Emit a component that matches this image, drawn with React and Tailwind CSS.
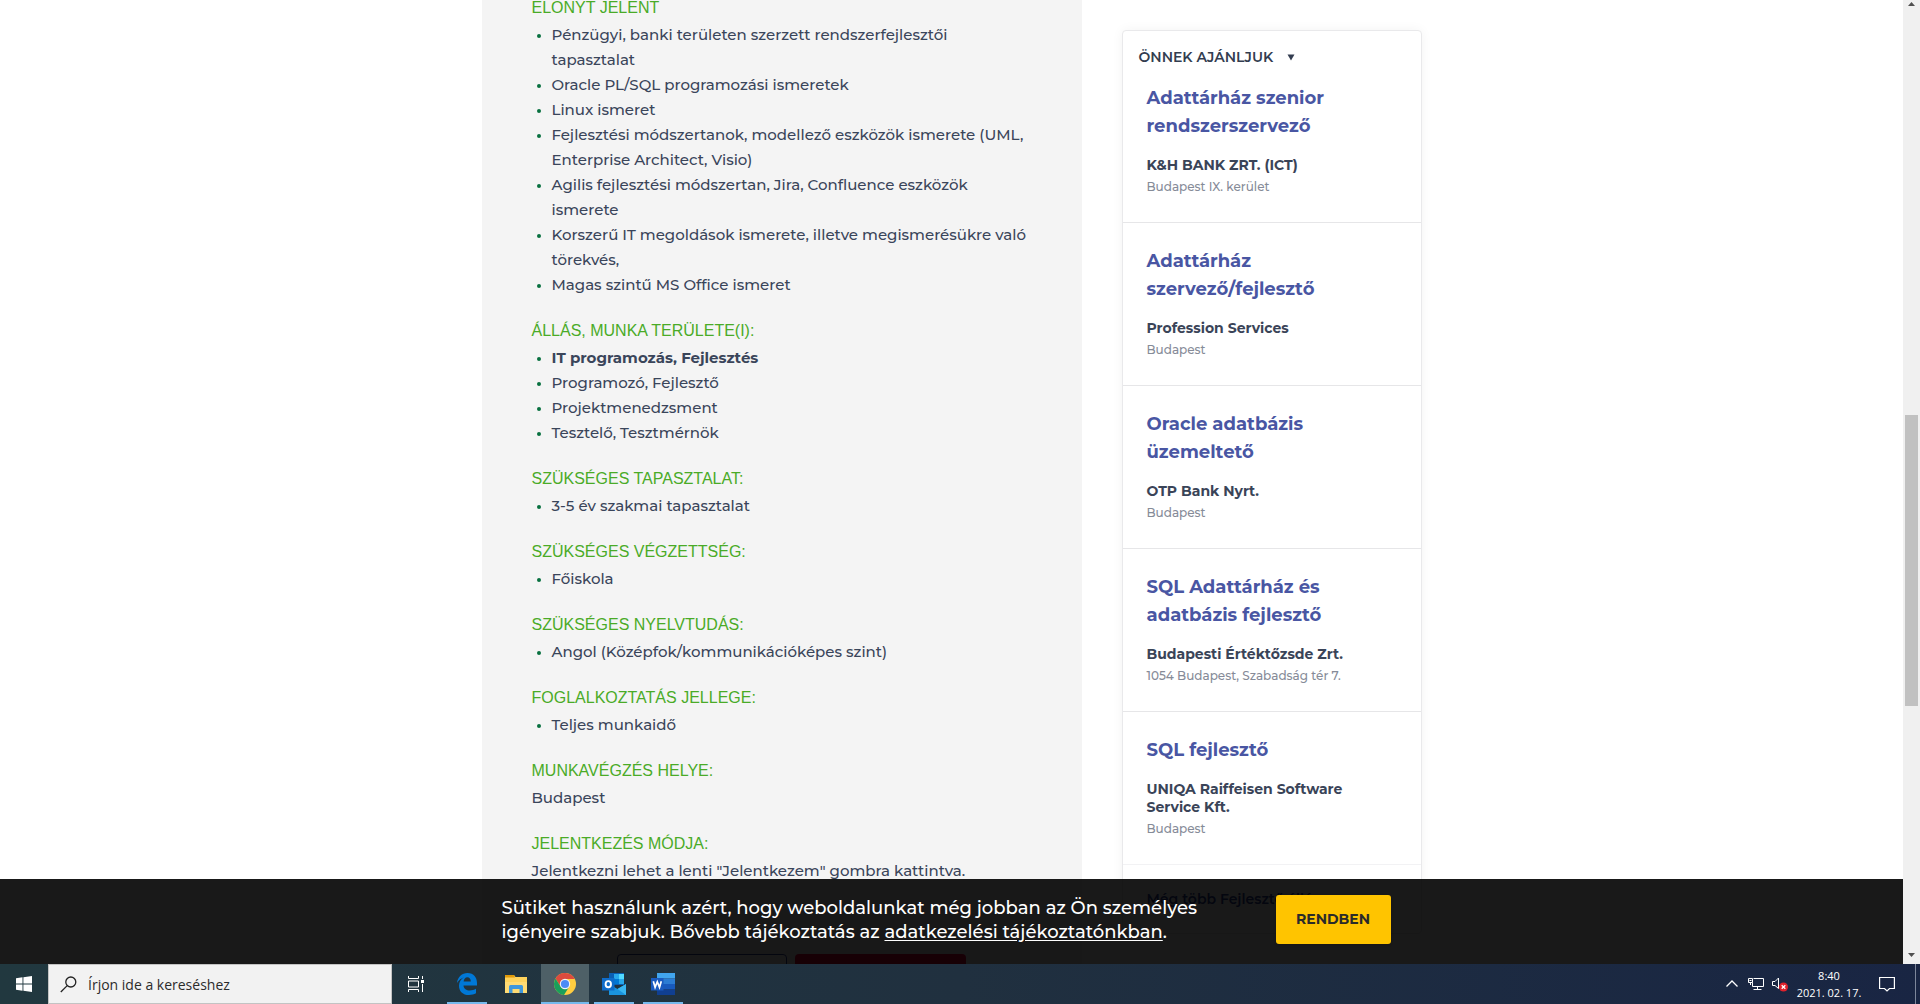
import React from "react";

const advantages = [
  "Pénzügyi, banki területen szerzett rendszerfejlesztői tapasztalat",
  "Oracle PL/SQL programozási ismeretek",
  "Linux ismeret",
  "Fejlesztési módszertanok, modellező eszközök ismerete (UML, Enterprise Architect, Visio)",
  "Agilis fejlesztési módszertan, Jira, Confluence eszközök ismerete",
  "Korszerű IT megoldások ismerete, illetve megismerésükre való törekvés,",
  "Magas szintű MS Office ismeret",
];

const sections = [
  { title: "ELŐNYT JELENT", items: advantages },
  {
    title: "ÁLLÁS, MUNKA TERÜLETE(I):",
    items: [
      <strong className="font-bold">IT programozás, Fejlesztés</strong>,
      "Programozó, Fejlesztő",
      "Projektmenedzsment",
      "Tesztelő, Tesztmérnök",
    ],
  },
  { title: "SZÜKSÉGES TAPASZTALAT:", items: ["3-5 év szakmai tapasztalat"] },
  { title: "SZÜKSÉGES VÉGZETTSÉG:", items: ["Főiskola"] },
  { title: "SZÜKSÉGES NYELVTUDÁS:", items: ["Angol (Középfok/kommunikációképes szint)"] },
  { title: "FOGLALKOZTATÁS JELLEGE:", items: ["Teljes munkaidő"] },
  { title: "MUNKAVÉGZÉS HELYE:", text: "Budapest" },
  { title: "JELENTKEZÉS MÓDJA:", text: 'Jelentkezni lehet a lenti "Jelentkezem" gombra kattintva.' },
];

const jobs = [
  { title: "Adattárház szenior rendszerszervező", company: "K&H BANK ZRT. (ICT)", place: "Budapest IX. kerület" },
  { title: "Adattárház szervező/fejlesztő", company: "Profession Services", place: "Budapest" },
  { title: "Oracle adatbázis üzemeltető", company: "OTP Bank Nyrt.", place: "Budapest" },
  { title: "SQL Adattárház és adatbázis fejlesztő", company: "Budapesti Értéktőzsde Zrt.", place: "1054 Budapest, Szabadság tér 7." },
  { title: "SQL fejlesztő", company: "UNIQA Raiffeisen Software Service Kft.", place: "Budapest" },
];

function Section({ title, items, text }) {
  return (
    <section className="mb-[25px]">
      <h2 className="mb-[5px] font-['Liberation_Sans',sans-serif] text-[16px] leading-[18px] font-normal text-[#4aab27]">{title}</h2>
      {items ? (
        <ul className="list-disc pl-5 marker:text-[12px] marker:text-[#08703f]">
          {items.map((item, i) => (
            <li key={i}>{item}</li>
          ))}
        </ul>
      ) : (
        <p>{text}</p>
      )}
    </section>
  );
}

function JobDetails() {
  return (
    <main className="w-[600px] shrink-0 bg-[#f4f4f4] pr-[52px] pl-[50px] text-[15px] leading-[25px] font-medium text-[#3a455a]">
      <div className="-mt-px">
        {sections.map((s) => (
          <Section key={s.title} {...s} />
        ))}
      </div>
      <div className="mt-[71px] flex gap-2 pl-[85px]">
        <button type="button" aria-label="Mentés" className="h-12 w-[170px] rounded border border-[#2e3f95] bg-white" />
        <button type="button" aria-label="Jelentkezem" className="h-12 w-[171px] rounded bg-[#e4003a]" />
      </div>
    </main>
  );
}

function Recommendations() {
  return (
    <aside className="mt-[30px] w-[300px] shrink-0 self-start rounded border border-[#e9e9eb] bg-white shadow-[0_0_12px_rgba(0,0,0,0.05)]">
      <button type="button" className="flex items-center gap-3.5 px-4 pt-[17px] pb-[18px] text-[14px] leading-[18px] font-semibold text-[#333d50]">
        ÖNNEK AJÁNLJUK
        <svg viewBox="0 0 8 7" className="h-[7px] w-2" fill="currentColor" aria-hidden="true">
          <path d="M0.5 0.5h7L4 6.5z" />
        </svg>
      </button>
      {jobs.map((job, i) => (
        <article key={job.title} className={i === 0 ? "pr-10 pb-[26px] pl-6" : "border-t border-[#e6e6e8] pt-6 pr-10 pb-[26px] pl-6"}>
          <h3 className="text-[18px] leading-7 font-bold text-[#4956a3]">
            <a href="#allas">{job.title}</a>
          </h3>
          <p className="mt-4 text-[14px] leading-[18px] font-bold text-[#3a4458]">{job.company}</p>
          <p className="mt-1 text-[12px] leading-[18px] font-medium text-[#868b98]">{job.place}</p>
        </article>
      ))}
      <div className="border-t border-[#f2f2f4] px-6 py-[22px]">
        <a href="#tovabbi" className="text-[14px] leading-[18px] font-semibold text-[#2e3f95]">Még több Fejlesztő állás</a>
      </div>
    </aside>
  );
}

function CookieBar() {
  return (
    <div className="absolute inset-x-0 bottom-0 bg-black/90 pr-[17px]">
      <div className="mx-auto flex h-[85px] w-[940px] items-center justify-between pr-[31px] pb-1 pl-5">
        <p className="w-[710px] text-[18px] leading-6 font-medium text-white">
          Sütiket használunk azért, hogy weboldalunkat még jobban az Ön személyes igényeire szabjuk. Bővebb tájékoztatás az{" "}
          <a href="#adatkezeles" className="underline underline-offset-2">adatkezelési tájékoztatónkban</a>.
        </p>
        <button type="button" className="h-[49px] w-[115px] rounded-[3px] bg-[#ffc400] text-[14px] font-bold text-[#2a2a2a] shadow">
          RENDBEN
        </button>
      </div>
    </div>
  );
}

function Scrollbar() {
  return (
    <div className="z-10 flex w-[17px] shrink-0 flex-col items-center bg-[#f0f0f0]">
      <svg viewBox="0 0 17 8" className="h-2 w-[17px]" aria-hidden="true"><path d="M5 6h7L8.5 2z" fill="#505050" /></svg>
      <div className="flex-[407]" />
      <div className="w-[13px] flex-[291] bg-[#c1c1c1]" />
      <div className="flex-[241]" />
      <svg viewBox="0 0 17 17" className="h-[17px] w-[17px]" aria-hidden="true"><path d="M5 6h7L8.5 10z" fill="#505050" /></svg>
    </div>
  );
}

function WindowsIcon() {
  return (
    <svg viewBox="0 0 16 16" className="size-4" fill="#fff" aria-hidden="true">
      <path d="M0 2.2 6.5 1.3v6.2H0zM7.4 1.2 16 0v7.5H7.4zM0 8.4h6.5v6.3L0 13.8zM7.4 8.4H16V16l-8.6-1.2z" />
    </svg>
  );
}

function TaskViewIcon() {
  return (
    <svg viewBox="0 0 16 16" className="size-4" fill="none" stroke="#fff" aria-hidden="true">
      <path d="M.5 0v2.5h10V0M.5 16v-2.5h10V16M.5 5h10v6H.5zM14.5 0v3M14.5 8v8" />
      <path d="M13 4h3v3h-3z" fill="#fff" stroke="none" />
    </svg>
  );
}

function EdgeIcon() {
  return (
    <svg viewBox="0 0 20 22" className="h-[22px] w-5" aria-hidden="true">
      <path fill="#0078d7" d="M0 10C.6 4 5 0 10.5 0 16.800 0 20 4.500 20 10v2.500H6.500c.2 3.500 3 5 6.300 5 2.300 0 4.400-.6 6.200-1.700v4.500c-2 1.100-4.300 1.700-7 1.700-6.200 0-10-3.700-10-9.300 0-3.700 2-6.700 5-8.400C4.400 5.300 1.700 7 0 10zm6.600-1.400h7.200c0-2.700-1.300-4.300-3.500-4.300-2 0-3.400 1.700-3.700 4.300z" />
    </svg>
  );
}

function ExplorerIcon() {
  return (
    <svg viewBox="0 0 22 18" className="h-[18px] w-[22px]" aria-hidden="true">
      <path d="M0 0h9l1.500 2H22v16H0z" fill="#ffd35c" />
      <path d="M0 0h9l1 2.500H0z" fill="#e09a0a" />
      <path d="M0 7h22v11H0z" fill="#ffdb74" />
      <path d="M4 18v-6.500Q4 10 5.500 10h11q1.500 0 1.500 1.500V18h-3.500v-4h-7v4z" fill="#3f97dc" />
    </svg>
  );
}

function ChromeIcon() {
  return (
    <svg viewBox="0 0 22 22" className="size-[22px]" aria-hidden="true">
      <circle cx="11" cy="11" r="11" fill="#ffcd40" />
      <path d="M11 11V6h9.800A11 11 0 0 0 1.500 5.500L6.600 13.500z" fill="#dd4b3e" />
      <path d="M1.500 5.500A11 11 0 0 0 10 22l5-8-4-3-4.400 2.500z" fill="#1a9f5b" />
      <circle cx="11" cy="11" r="5.200" fill="#f4f4f4" />
      <circle cx="11" cy="11" r="4.100" fill="#4c8bf5" />
    </svg>
  );
}

function OutlookIcon() {
  return (
    <svg viewBox="0 0 24 22" className="h-[22px] w-6" aria-hidden="true">
      <path d="M7 0h15v12H7z" fill="#0a5fb4" />
      <path d="M12 1h5v5h-5z" fill="#28a8ea" />
      <path d="M17 1h5v5h-5z" fill="#50d9ff" />
      <path d="M12 6h5v5h-5z" fill="#0078d4" />
      <path d="M17 6h5v5h-5z" fill="#28a8ea" />
      <path d="M7 11l8.500 5L24 11v11H7z" fill="#1a94de" />
      <path d="M24 11v11L15.500 16z" fill="#38b6f1" />
      <path d="M0 5h12.500v12.500H0z" fill="#0f6cc9" />
      <ellipse cx="6.300" cy="11.200" rx="2.700" ry="3.100" fill="none" stroke="#fff" strokeWidth="1.900" />
    </svg>
  );
}

function WordIcon() {
  return (
    <svg viewBox="0 0 24 22" className="h-[22px] w-6" aria-hidden="true">
      <path d="M6 0h18v5.500H6z" fill="#41a5ee" />
      <path d="M6 5.500h18V11H6z" fill="#2b7cd3" />
      <path d="M6 11h18v5.500H6z" fill="#185abd" />
      <path d="M6 16.500h18V22H6z" fill="#103f91" />
      <path d="M0 5h12.500v12.500H0z" fill="#1a5bbf" />
      <path d="M2.300 8.300l1.800 6 2.200-5.500 2.200 5.500 1.800-6" fill="none" stroke="#fff" strokeWidth="1.700" />
    </svg>
  );
}

const apps = [
  { name: "Microsoft Edge", Icon: EdgeIcon, open: true },
  { name: "Fájlkezelő", Icon: ExplorerIcon },
  { name: "Google Chrome", Icon: ChromeIcon, open: true, active: true },
  { name: "Outlook", Icon: OutlookIcon, open: true },
  { name: "Word", Icon: WordIcon, open: true },
];

function Taskbar() {
  return (
    <footer className="flex h-10 shrink-0 items-stretch bg-linear-to-r from-[#21383f] via-[#20303f] to-[#192543] text-white">
      <button type="button" aria-label="Start" className="flex w-12 items-center justify-center"><WindowsIcon /></button>
      <label className="flex w-[344px] items-center gap-[11px] border border-[#c3c3c3] bg-[#f2f2f2] pl-[11px]">
        <svg viewBox="0 0 17 17" className="size-[17px]" fill="none" stroke="#222" strokeWidth="1.300" aria-hidden="true">
          <circle cx="10.800" cy="6" r="5" />
          <path d="M7.200 9.600.8 16" />
        </svg>
        <input
          type="text"
          aria-label="Keresés"
          placeholder="Írjon ide a kereséshez"
          className="min-w-0 flex-1 bg-transparent font-['Open_Sans',sans-serif] text-[14px] text-[#222] outline-none placeholder:text-[#2b2b2b]"
        />
      </label>
      <button type="button" aria-label="Feladatnézet" className="mr-[3px] flex w-12 items-center justify-center"><TaskViewIcon /></button>
      <nav className="flex gap-px" aria-label="Alkalmazások">
        {apps.map(({ name, Icon, open, active }) => (
          <button
            key={name}
            type="button"
            aria-label={name}
            className={active ? "flex w-12 flex-col items-center bg-[#4e6067]" : "flex w-12 flex-col items-center"}
          >
            <span className="flex flex-1 items-center pt-0.5"><Icon /></span>
            <span className={active ? "h-0.5 w-full bg-[#76b9ed]" : open ? "h-0.5 w-10 bg-[#76b9ed]" : "h-0.5 w-10"} />
          </button>
        ))}
      </nav>
      <div className="ml-auto flex items-center">
        <button type="button" aria-label="Rejtett ikonok" className="mr-2.5">
          <svg viewBox="0 0 12 8" className="h-2 w-3" fill="none" stroke="#fff" strokeWidth="1.300" aria-hidden="true"><path d="M.5 6.500 6 1l5.500 5.500" /></svg>
        </button>
        <button type="button" aria-label="Hálózat" className="mr-2">
          <svg viewBox="0 0 16 14" className="h-3.5 w-4" fill="none" stroke="#fff" aria-hidden="true">
            <path d="M5.500 1.500h10v8H4.500v-4M.5 1.500h4v4h-4zM2.500 5.500v2.500M9.500 9.500v3M5.500 12.500h8M1.500 3.500h2" />
          </svg>
        </button>
        <button type="button" aria-label="Hang némítva" className="mr-2">
          <svg viewBox="0 0 16 16" className="size-4" aria-hidden="true">
            <path d="M.5 5.500H3l3.500-3.500v10.500L3 9.500H.5z" fill="none" stroke="#fff" />
            <circle cx="11.500" cy="11" r="4.500" fill="#e0212b" />
            <path d="M9.700 9.200l3.600 3.600M13.300 9.200l-3.600 3.600" stroke="#fff" strokeWidth="1.300" />
          </svg>
        </button>
        <time className="w-[66px] text-center font-['Open_Sans',sans-serif] text-[11px] leading-[17px] whitespace-nowrap">
          8:40
          <br />
          2021. 02. 17.
        </time>
        <button type="button" aria-label="Értesítések" className="ml-[17px]">
          <svg viewBox="0 0 16 16" className="size-4" fill="none" stroke="#fff" strokeWidth="1.200" aria-hidden="true">
            <path d="M.6 1.500h14.800v11H10.500L8 15l-2.500-2.500H.6z" />
          </svg>
        </button>
        <span className="mr-1 ml-5 h-10 w-px bg-[#7d869a]" />
      </div>
    </footer>
  );
}

export default function App() {
  return (
    <div className="flex h-screen flex-col overflow-hidden bg-white font-[Montserrat,Inter,sans-serif]">
      <div className="relative flex min-h-0 flex-1 overflow-hidden">
        <div className="min-w-0 flex-1 overflow-hidden">
          <div className="mx-auto flex w-[940px] gap-10">
            <JobDetails />
            <Recommendations />
          </div>
        </div>
        <CookieBar />
        <Scrollbar />
      </div>
      <Taskbar />
    </div>
  );
}
